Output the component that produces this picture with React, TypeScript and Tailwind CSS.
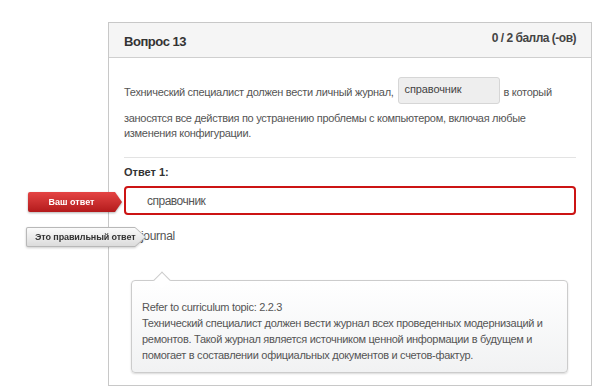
import React from 'react';

const Question = () => {
  return (
    <div className="relative w-[600px] h-[392px] bg-white overflow-hidden whitespace-nowrap font-['Liberation_Sans',Arial,sans-serif]">
      {/* карточка вопроса */}
      <div className="ml-[108px] mt-[22px] w-[484px] h-[364px] border border-[#c8c8c8]">
        <div className="h-[35px] bg-[#f5f5f5] border-b border-[#cfcfcf] flex items-start justify-between px-[15px]">
          <h2 className="mt-[11px] text-[13px] leading-[16px] tracking-[-0.45px] font-bold text-[#333]">Вопрос 13</h2>
          <span className="mt-[8px] text-[12px] leading-[14px] tracking-[-0.5px] font-bold text-[#444]">0 / 2 балла (-ов)</span>
        </div>

        <div className="px-[15px] pt-[19px]">
          <div className="text-[11px] tracking-[-0.3px] text-[#555]">
            <div className="flex items-center h-[27px]">
              <span className="mt-[4px]">Технический специалист должен вести личный журнал,</span>
              <span className="ml-[4px] w-[102px] h-[27px] shrink-0 bg-[#eeeeee] border border-[#d6d6d6] rounded-[3px] px-[6px] pt-[4px] leading-[15px] tracking-[-0.1px] text-[#444]">
                справочник
              </span>
              <span className="ml-[4px] mt-[4px]">в который</span>
            </div>
            <p className="mt-[7px] leading-[15px]">
              заносятся все действия по устранению проблемы с компьютером, включая любые
              <br />
              изменения конфигурации.
            </p>
          </div>

          <hr className="mt-[16px] border-0 h-px bg-[#e3e3e3]" />

          <div className="mt-[7px] text-[11px] leading-[14px] font-bold text-[#333]">Ответ 1:</div>

          <div className="mt-[7px] h-[29px] border-2 border-[#cc1414] rounded-[4px] pl-[21px] flex items-center text-[12px] tracking-[-0.5px] text-[#555]">
            справочник
          </div>

          <div className="mt-[13px] pl-[17px] text-[12px] leading-[16px] tracking-[-0.3px] text-[#555]">journal</div>

          <div className="relative mt-[36px] ml-[7px] mr-[8px] border border-[#cccccc] rounded-[4px] bg-linear-to-b from-white to-[#f1f2f3] shadow-[0_1px_2px_rgba(0,0,0,0.15)] px-[10px] pt-[18px] pb-[9px] text-[11px] leading-[16px] tracking-[-0.3px] text-[#555]">
            <div className="absolute left-[24px] top-[-7px] w-[12px] h-[12px] rotate-45 bg-white border-t border-l border-[#cccccc]" />
            <p className="relative">
              Refer to curriculum topic: 2.2.3
              <br />
              Технический специалист должен вести журнал всех проведенных модернизаций и
              <br />
              ремонтов. Такой журнал является источником ценной информации в будущем и
              <br />
              помогает в составлении официальных документов и счетов-фактур.
            </p>
          </div>
        </div>
      </div>

      {/* метка "Ваш ответ" */}
      <div className="absolute left-[28px] top-[192px] drop-shadow-[0_1px_1px_rgba(0,0,0,0.3)]">
        <div className="w-[94px] h-[20px] rounded-l-[2px] bg-linear-to-b from-[#e54444] to-[#b3191b] [clip-path:polygon(0_0,87px_0,94px_50%,87px_100%,0_100%)]">
          <div className="w-[87px] text-center text-[9px] leading-[20px] font-bold text-white">Ваш ответ</div>
        </div>
      </div>

      {/* метка "Это правильный ответ" */}
      <div className="absolute left-[26px] top-[227px] drop-shadow-[0_1px_1px_rgba(0,0,0,0.2)]">
        <div className="relative w-[120px] h-[20px] rounded-l-[2px] bg-[#b8b8b8] [clip-path:polygon(0_0,109px_0,120px_50%,109px_100%,0_100%)]">
          <div className="absolute inset-[1px] rounded-l-[1px] bg-linear-to-b from-[#fbfbfb] to-[#dcdcdc] [clip-path:polygon(0_0,calc(100%_-_10px)_0,100%_50%,calc(100%_-_10px)_100%,0_100%)]">
            <div className="pl-[8px] text-[9px] leading-[18px] tracking-[-0.1px] font-bold text-[#333]">Это правильный ответ</div>
          </div>
        </div>
      </div>
    </div>
  );
};

export default function App() {
  return <Question />;
}
